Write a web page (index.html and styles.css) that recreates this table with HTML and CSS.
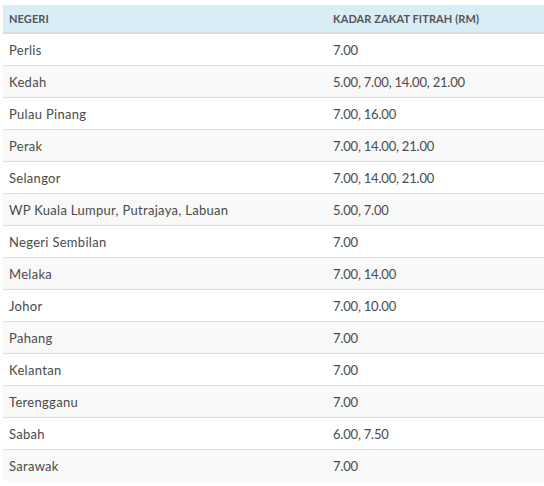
FILE: index.html
```html
<!DOCTYPE html>
<html>
<head>
<meta charset="utf-8">
<link rel="stylesheet" href="styles.css">
</head>
<body>
<table class="zakat">
  <thead>
    <tr><th class="c1">NEGERI</th><th>KADAR ZAKAT FITRAH (RM)</th></tr>
  </thead>
  <tbody>
    <tr><td>Perlis</td><td class="num">7.00</td></tr>
    <tr><td>Kedah</td><td class="num">5.00, 7.00, 14.00, 21.00</td></tr>
    <tr><td>Pulau Pinang</td><td class="num">7.00, 16.00</td></tr>
    <tr><td>Perak</td><td class="num">7.00, 14.00, 21.00</td></tr>
    <tr><td>Selangor</td><td class="num">7.00, 14.00, 21.00</td></tr>
    <tr><td>WP Kuala Lumpur, Putrajaya, Labuan</td><td class="num">5.00, 7.00</td></tr>
    <tr><td>Negeri Sembilan</td><td class="num">7.00</td></tr>
    <tr><td>Melaka</td><td class="num">7.00, 14.00</td></tr>
    <tr><td>Johor</td><td class="num">7.00, 10.00</td></tr>
    <tr><td>Pahang</td><td class="num">7.00</td></tr>
    <tr><td>Kelantan</td><td class="num">7.00</td></tr>
    <tr><td>Terengganu</td><td class="num">7.00</td></tr>
    <tr><td>Sabah</td><td class="num">6.00, 7.50</td></tr>
    <tr><td>Sarawak</td><td class="num">7.00</td></tr>
  </tbody>
</table>
</body>
</html>
```
FILE: styles.css
```css
html, body { margin: 0; padding: 0; background: #fff; }
body { padding: 5px 0 0 3px; font-family: "Lato", "Open Sans", sans-serif; color: #555; }
.zakat { border-collapse: collapse; width: 541px; table-layout: fixed; }
.zakat th, .zakat td { text-align: left; padding: 0 6px; vertical-align: middle; }
.zakat .c1 { width: 312px; }
.zakat thead th { background: #d9edf7; height: 27px; font-size: 11px; font-weight: 700; color: #555; letter-spacing: 0.1px; border-bottom: 2px solid #ddd; }
.zakat tbody td { height: 31px; font-size: 13px; color: #4a4a4a; letter-spacing: 0.3px; border-top: 1px solid #ddd; }
.zakat tbody td.num { letter-spacing: -0.2px; }
.zakat tbody tr:first-child td { border-top: none; }
.zakat tbody tr:nth-child(even) td { background: #f9f9f9; }
```
